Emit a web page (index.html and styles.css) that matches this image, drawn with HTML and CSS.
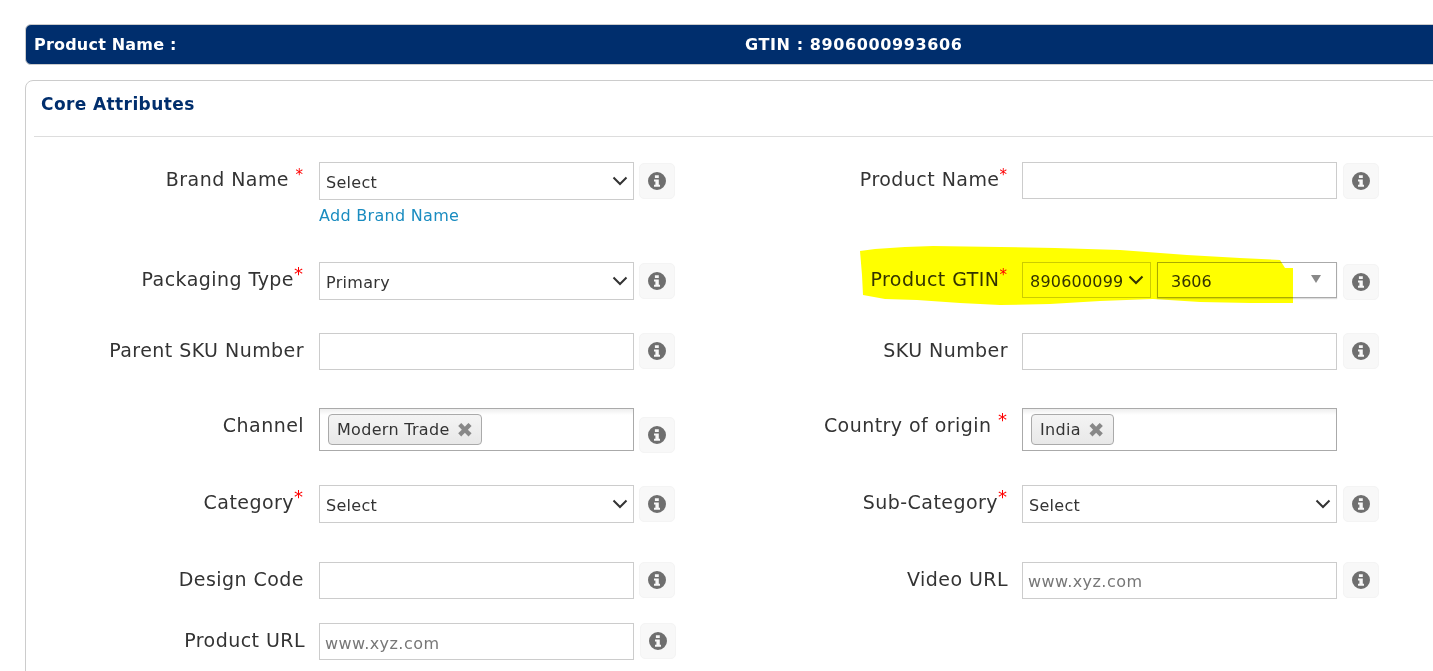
FILE: index.html
```html
<!DOCTYPE html>
<html lang="en">
<head>
<meta charset="utf-8">
<title>Core Attributes</title>
<link rel="stylesheet" href="styles.css">
</head>
<body>
<svg width="0" height="0" class="defs"><defs>
<symbol id="info" viewBox="0 0 18 18"><path fill-rule="evenodd" d="M9 0a9 9 0 1 1 0 18A9 9 0 0 1 9 0ZM6.9 3.2v2.9h3.9V3.2ZM6 7.4v2h1.4v3.3H6v2h6v-2h-1.2V7.4Z"/></symbol>
</defs></svg>
<main class="page">
  <header class="banner"><span class="banner-name">Product Name :</span><span class="banner-gtin">GTIN : 8906000993606</span></header>
  <section class="card">
    <h2 class="card-title">Core Attributes</h2>
    <div class="row row-1">
      <div class="field"><label class="label">Brand Name <sup class="req req-thin">*</sup></label><div class="stack"><select class="ctl"><option>Select</option></select><a class="add-link">Add Brand Name</a></div><button class="info info-select"><svg><use href="#info"/></svg></button></div>
      <div class="field"><label class="label">Product Name<sup class="req req-thin">*</sup></label><input class="ctl"><button class="info info-select"><svg><use href="#info"/></svg></button></div>
    </div>
    <div class="row row-2">
      <div class="field"><label class="label">Packaging Type<sup class="req">*</sup></label><select class="ctl"><option>Primary</option></select><button class="info info-select"><svg><use href="#info"/></svg></button></div>
      <div class="field"><label class="label">Product GTIN<sup class="req req-thin">*</sup></label><div class="gtin"><select class="ctl gtin-prefix"><option>890600099</option></select><div class="combo"><span>3606</span><i class="combo-arrow"></i></div></div><button class="info info-gtin"><svg><use href="#info"/></svg></button></div>
    </div>
    <div class="row row-3">
      <div class="field"><label class="label">Parent SKU Number</label><input class="ctl"><button class="info"><svg><use href="#info"/></svg></button></div>
      <div class="field"><label class="label">SKU Number</label><input class="ctl"><button class="info"><svg><use href="#info"/></svg></button></div>
    </div>
    <div class="row row-4">
      <div class="field"><label class="label">Channel</label><div class="multi"><span class="token">Modern Trade <b class="token-x">✖</b></span></div><button class="info info-low"><svg><use href="#info"/></svg></button></div>
      <div class="field"><label class="label">Country of origin <sup class="req">*</sup></label><div class="multi"><span class="token">India <b class="token-x">✖</b></span></div></div>
    </div>
    <div class="row row-5">
      <div class="field"><label class="label">Category<sup class="req">*</sup></label><select class="ctl"><option>Select</option></select><button class="info info-select"><svg><use href="#info"/></svg></button></div>
      <div class="field"><label class="label">Sub-Category<sup class="req">*</sup></label><select class="ctl"><option>Select</option></select><button class="info info-select"><svg><use href="#info"/></svg></button></div>
    </div>
    <div class="row row-6">
      <div class="field"><label class="label">Design Code</label><input class="ctl"><button class="info"><svg><use href="#info"/></svg></button></div>
      <div class="field"><label class="label">Video URL</label><input class="ctl" placeholder="www.xyz.com"><button class="info"><svg><use href="#info"/></svg></button></div>
    </div>
    <div class="row row-7">
      <div class="field"><label class="label">Product URL</label><input class="ctl" placeholder="www.xyz.com"><button class="info"><svg><use href="#info"/></svg></button></div>
    </div>
  </section>
</main>
<svg class="marker" viewBox="0 0 1433 671" width="1433" height="671" aria-hidden="true"><path fill="#ffff00" d="M860 251 875 249 905 247 933 246 1000 247 1055 248 1120 250 1187 255 1240 258 1280 260 1285 268 1293 268 1293 303 1250 303 1200 302 1153 299 1100 301 1050 304 1000 305 960 303 917 300 885 299 863 295 862 275Z"/></svg>
</body>
</html>
```

FILE: styles.css
```css
html, body { margin: 0; height: 671px; overflow: hidden; background: #fff; }
body { font-family: "DejaVu Sans", Verdana, sans-serif; color: #333; position: relative; }
.defs { position: absolute; }
.page { width: 1500px; padding: 24px 0 0 25px; }

.banner { display: flex; align-items: center; height: 41px; box-sizing: border-box; background: #002e6d; border: 1px solid #ccc; border-radius: 6px; padding-left: 8px; padding-bottom: 1px; color: #fff; font-weight: 700; font-size: 16px; }
.banner-name { width: 711px; letter-spacing: .2px; }
.banner-gtin { letter-spacing: .6px; }

.card { margin-top: 15px; height: 700px; box-sizing: border-box; border: 1px solid #ccc; border-radius: 8px; padding: 0 0 0 8px; }
.card-title { margin: 0; height: 56px; box-sizing: border-box; padding: 12px 0 0 7px; border-bottom: 1px solid #ddd; color: #002e6d; font-size: 17px; letter-spacing: .4px; line-height: 22px; font-weight: 700; }

.row { display: flex; }
.row-1 { margin-top: 25px; height: 100px; }
.row-2 { height: 71px; }
.row-3 { height: 75px; }
.row-4 { height: 77px; }
.row-5 { height: 77px; }
.row-6 { height: 61px; }

.field { display: flex; align-items: flex-start; width: 703px; }
.label { width: 270px; text-align: right; padding-right: 15px; font-size: 19px; letter-spacing: .45px; line-height: 35px; color: #333; white-space: nowrap; }
.field:last-child .label { width: 271px; padding-right: 14px; }
.req { color: #f00; font-size: 18px; letter-spacing: 0; line-height: 0; vertical-align: 6px; margin-right: 1px; }
.req-thin { font-size: 15px; }

.ctl { width: 315px; height: 38px; box-sizing: border-box; border: 1px solid #ccc; border-radius: 0; background: #fff; font: 16px "DejaVu Sans", Verdana, sans-serif; letter-spacing: .3px; color: #333; padding: 2px 5px 0; margin: 0; outline: none; }
select.ctl { appearance: none; -webkit-appearance: none; padding-left: 6px; background: #fff url("data:image/svg+xml,%3Csvg xmlns='http://www.w3.org/2000/svg' width='16' height='10' viewBox='0 0 16 10'%3E%3Cpath d='M1.5 1.5 8 8l6.5-6.5' fill='none' stroke='%23333' stroke-width='2'/%3E%3C/svg%3E") no-repeat right 5px center; }
input.ctl { height: 37px; }
input.ctl::placeholder { color: #777; opacity: 1; letter-spacing: .45px; }
.row-7 .ctl { padding-top: 4px; }
.stack { display: flex; flex-direction: column; align-items: flex-start; }
.add-link { margin-top: 5px; color: #1a8cc0; font-size: 16px; letter-spacing: .3px; line-height: 22px; }

.info { width: 36px; height: 36px; margin-left: 5px; padding: 0; display: flex; align-items: center; justify-content: center; background: #f8f8f8; border: 1px solid #f4f4f4; border-radius: 5px; color: #6f6f6f; }
.info svg { width: 18px; height: 18px; fill: currentColor; }
.info-select { margin-top: 1px; }
.info-gtin { margin-top: 2px; }
.info-low { margin-top: 9px; }
.field:last-child .info { margin-left: 6px; }

.gtin { display: flex; width: 315px; gap: 6px; }
select.gtin-prefix { width: 129px; height: 36px; padding-left: 7px; letter-spacing: .2px; background-position: right 6px center; }
.combo { flex: 1; height: 36px; box-sizing: border-box; border: 1px solid #aaa; box-shadow: 0 1px 1px #ddd; padding-left: 13px; display: flex; align-items: center; justify-content: space-between; font-size: 16px; padding-top: 2px; }
.combo-arrow { width: 0; height: 0; margin: -4px 15px 0 0; border-left: 5px solid transparent; border-right: 5px solid transparent; border-top: 8px solid #888; }

.multi { width: 315px; height: 43px; box-sizing: border-box; border: 1px solid #aaa; padding: 5px 8px; background: linear-gradient(#eee, #fff 6px); }
.token { display: inline-flex; align-items: center; gap: 7px; height: 31px; box-sizing: border-box; padding: 0 8px; border: 1px solid #aaa; border-radius: 4px; background: linear-gradient(#f4f4f4, #e8e8e8); font-size: 16px; letter-spacing: .3px; color: #333; }
.token-x { color: #888; font-size: 20px; line-height: 1; letter-spacing: 0; }

.marker { position: absolute; left: 0; top: 0; mix-blend-mode: multiply; pointer-events: none; }
```
